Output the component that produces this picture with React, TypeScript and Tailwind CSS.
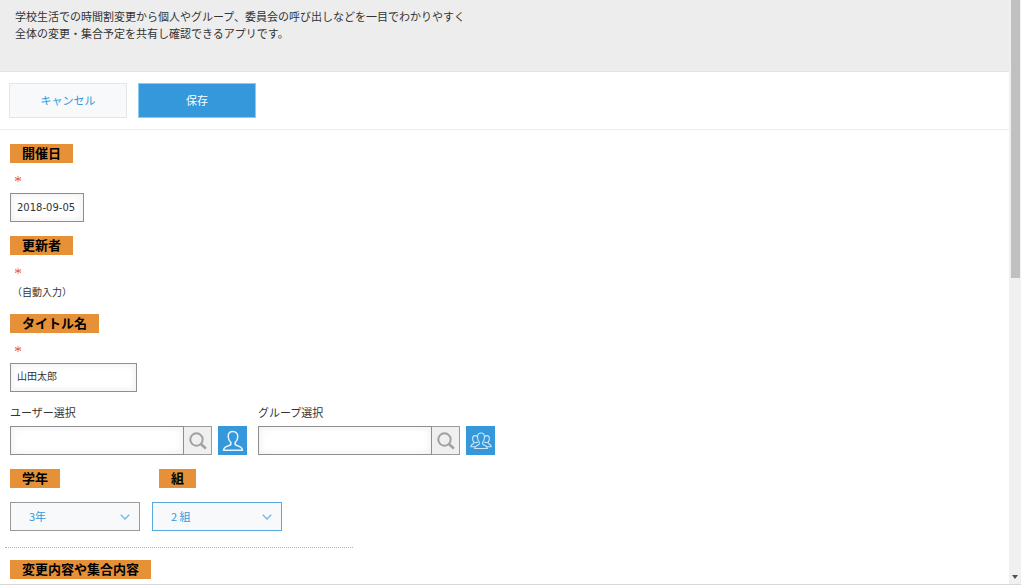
import { useId, useState, type ReactNode } from 'react'
import { clsx } from 'clsx'

const FIELD = 'h-[29px] border border-[#8f8f8f] bg-white px-[6px] text-[#333] shadow-[inset_2px_2px_6px_#f3f3f3,inset_-2px_-2px_6px_#f3f3f3] outline-none focus:border-[#3498db]'

function Heading({ children, htmlFor }: { children: ReactNode; htmlFor?: string }) {
  const className = 'block w-fit bg-[#e69138] px-3 pb-[2px] text-[13px] leading-[17px] font-bold text-black'
  return htmlFor
    ? <label htmlFor={htmlFor} className={className}>{children}</label>
    : <h2 className={className}>{children}</h2>
}

function Required() {
  return (
    <svg viewBox="0 0 8 8" className="mt-3 mb-[10px] ml-1 size-2 text-[#e74c3c]" role="img" aria-label="必須">
      <path d="M4 .8v6.4M1 2.200l6 3.600M7 2.200L1 5.800M.8 4h6.4" stroke="currentColor" strokeWidth=".7" fill="none" />
    </svg>
  )
}

function SearchIcon() {
  return (
    <svg viewBox="0 0 20 20" className="size-5" fill="none" stroke="#a0a0a0" aria-hidden="true">
      <circle cx="8.5" cy="8.5" r="6.2" strokeWidth="2" />
      <path d="M13 13l4.900 4.600" strokeWidth="2.6" />
    </svg>
  )
}

function UserIcon() {
  return (
    <svg viewBox="0 0 22 22" className="size-[22px]" fill="none" stroke="#e6f3fc" strokeWidth="1.5" strokeLinejoin="round" aria-hidden="true">
      <path d="M11 1.6c-3 0-4.8 2-4.8 4.8 0 2.6 1 4.6 2.6 6 .6 1.8-.1 2.6-1.600 3.100-2.700.9-5.400 1.400-5.700 4.700h19c-.3-3.300-3-3.800-5.700-4.700-1.500-.5-2.200-1.300-1.600-3.100 1.600-1.400 2.600-3.400 2.600-6 0-2.800-1.800-4.800-4.800-4.800z" />
    </svg>
  )
}

function GroupIcon() {
  return (
    <svg viewBox="0 0 22 22" className="size-[22px]" fill="none" stroke="#cfe8f9" strokeWidth="1.1" strokeLinejoin="round" aria-hidden="true">
      <path d="M11 3c-2.300 0-3.500 1.600-3.500 4s.8 4.200 1.900 5.400c.4 1.500-.2 2.100-1.300 2.600-1.700.8-3.300 1.200-3.500 3.500h12.800c-.2-2.300-1.800-2.700-3.500-3.500-1.100-.5-1.700-1.100-1.300-2.600 1.100-1.200 1.900-3 1.900-5.400s-1.200-4-3.500-4z" />
      <path d="M7.300 6.600C6.700 5.900 6 5.600 5.200 5.600c-1.700 0-2.600 1.300-2.600 3 0 1.500.5 2.700 1.300 3.500.2 1.200-.2 1.600-1 2C1.700 14.700.9 15.100.8 16.700h4.400M4.600 12.200c1 .5 2.200.4 3.200-.1" />
      <path d="M14.700 6.600c.6-.7 1.300-1 2.100-1 1.700 0 2.600 1.300 2.600 3 0 1.500-.5 2.700-1.300 3.500-.2 1.200.2 1.600 1 2 1.200.6 2 1 2.100 2.600h-4.400M17.400 12.200c-1 .5-2.200.4-3.200-.1" />
    </svg>
  )
}

function Picker({ label, icon }: { label: string; icon: ReactNode }) {
  const id = useId()
  return (
    <div>
      <label htmlFor={id} className="block leading-4">{label}</label>
      <div className="mt-[6px] flex">
        <input id={id} className={clsx(FIELD, 'w-[174px]')} />
        <button type="button" aria-label={`${label} 検索`} className="flex w-7 items-center justify-center border border-l-0 border-[#9b9b9b] bg-[#efefef]">
          <SearchIcon />
        </button>
        <button type="button" aria-label={`${label} 一覧`} className="ml-[6px] flex w-[29px] items-center justify-center bg-[#3498db]">
          {icon}
        </button>
      </div>
    </div>
  )
}

function Dropdown({ id, options, initial, active }: { id: string; options: string[]; initial: string; active?: boolean }) {
  const [value, setValue] = useState(initial)
  return (
    <div className="relative mt-[14px] w-[130px]">
      <select
        id={id}
        value={value}
        onChange={(e) => setValue(e.target.value)}
        className={clsx(
          'block h-[29px] w-full appearance-none border bg-[#f7f9fa] pr-8 pl-[18px] text-[#3498db] outline-none',
          active ? 'border-[#58a9df]' : 'border-[#999999]',
        )}
      >
        {options.map((o) => <option key={o}>{o}</option>)}
      </select>
      <svg viewBox="0 0 10 6" className="pointer-events-none absolute top-3 right-[10px] h-[6px] w-[10px]" fill="none" stroke="#70b7e7" strokeWidth="1.3" aria-hidden="true">
        <path d="M.8 .8L5 5 9.200 .8" />
      </svg>
    </div>
  )
}

export default function App() {
  const [date, setDate] = useState('2018-09-05')
  const [title, setTitle] = useState('山田太郎')

  return (
    <div className="flex h-screen overflow-hidden border-b border-[#d8d8d8] bg-white font-['Noto_Sans_CJK_JP','Noto_Sans',sans-serif] text-[11px] text-[#333]">
      <div className="min-w-0 flex-1 overflow-hidden">
        <header className="border-b border-[#e3e3e3] bg-[#ededed] px-[15px] pt-2 pb-[29px] leading-[17px]">
          <p>学校生活での時間割変更から個人やグループ、委員会の呼び出しなどを一目でわかりやすく</p>
          <p>全体の変更・集合予定を共有し確認できるアプリです。</p>
        </header>

        <div className="flex gap-[11px] border-b border-[#ececec] px-[9px] py-[11px]">
          <button type="button" className="h-[35px] w-[118px] border border-[#e3e7e8] bg-[#f7f9fa] text-[#3498db]">キャンセル</button>
          <button type="button" className="h-[35px] w-[118px] border border-[#8ccaf2] bg-[#3498db] text-white">保存</button>
        </div>

        <form className="px-[10px] pt-[14px]" onSubmit={(e) => e.preventDefault()}>
          <Heading htmlFor="date">開催日</Heading>
          <Required />
          <input
            id="date"
            required
            value={date}
            onChange={(e) => setDate(e.target.value)}
            className={clsx(FIELD, "block w-[74px] font-['DejaVu_Sans',sans-serif] text-[10px]")}
          />

          <div className="mt-[14px]">
            <Heading>更新者</Heading>
            <Required />
            <p className="px-[2px] text-[10px] leading-[13px]">（自動入力）</p>
          </div>

          <div className="mt-4">
            <Heading htmlFor="title">タイトル名</Heading>
            <Required />
            <input id="title" required value={title} onChange={(e) => setTitle(e.target.value)} className={clsx(FIELD, 'block w-[127px] pb-1 text-[10px]')} />
          </div>

          <div className="mt-3 flex gap-[11px]">
            <Picker label="ユーザー選択" icon={<UserIcon />} />
            <Picker label="グループ選択" icon={<GroupIcon />} />
          </div>

          <div className="mt-[14px] flex gap-3">
            <div>
              <Heading htmlFor="grade">学年</Heading>
              <Dropdown id="grade" options={['1年', '2年', '3年']} initial="3年" />
            </div>
            <div>
              <div className="pl-[7px]"><Heading htmlFor="class">組</Heading></div>
              <Dropdown id="class" options={['1 組', '2 組', '3 組']} initial="2 組" active />
            </div>
          </div>

          <hr className="-ml-[5px] mt-4 w-[348px] border-t border-dotted border-[#b0b0b0]" />

          <div className="mt-3">
            <Heading>変更内容や集合内容</Heading>
          </div>
        </form>
      </div>

      {/* Scroll track */}
      <div className="flex w-3 shrink-0 flex-col items-end justify-between bg-[#f0f0f0]" aria-hidden="true">
        <div className="mr-px h-[47.6%] w-[9px] bg-[#c0c0c0]" />
        <svg viewBox="0 0 6 4" className="mr-[3px] mb-[5px] h-1 w-[6px]" fill="#505050">
          <path d="M0 0h6L3 4z" />
        </svg>
      </div>
    </div>
  )
}
